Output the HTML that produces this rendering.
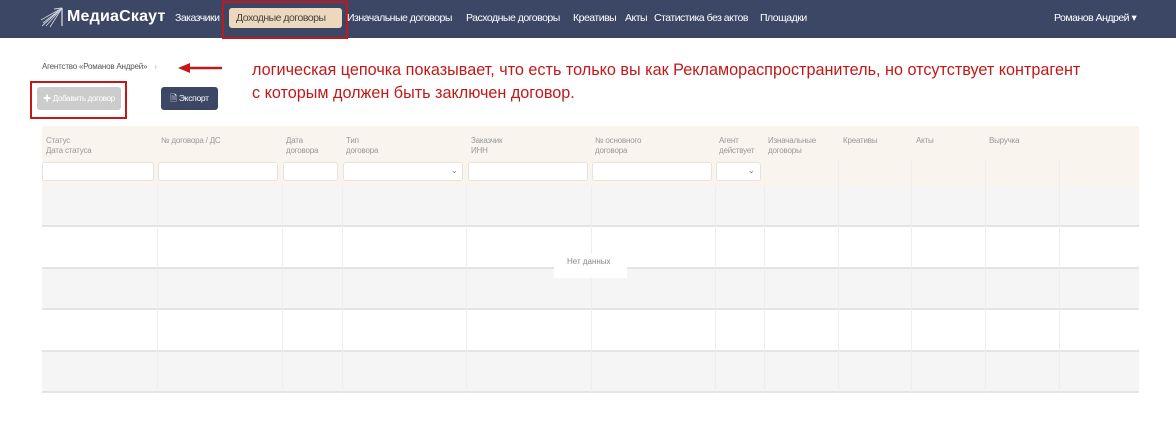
<!DOCTYPE html>
<html><head><meta charset="utf-8"><style>
*{margin:0;padding:0;box-sizing:border-box}
body{width:1176px;height:423px;background:#fff;font-family:"Liberation Sans","Noto Sans CJK SC",sans-serif;position:relative;overflow:hidden}
.a{position:absolute}
.nav{left:0;top:0;width:1176px;height:38px;background:#3b4765}
.nl{color:#fff;font-size:10.5px;top:12px;letter-spacing:-0.5px;white-space:nowrap}
.hd{font-size:8px;color:#999;line-height:10px;letter-spacing:-0.2px}
.inp{height:19px;background:#fff;border:1px solid #e6e2dd;border-radius:3px;top:162px}
.row{left:42px;width:1097px;height:41px;border-bottom:2px solid #e4e4e4}
.vl{width:1px;background:#eee}
</style></head><body>
<div class="a nav"></div>
<svg class="a" style="left:40px;top:6px" width="24" height="22" viewBox="0 0 24 22"><g stroke="#c9cfdb" stroke-width="0.9" fill="none"><path d="M2 20 L22 2"/><path d="M3 17 L22 2"/><path d="M6 20 L22 2"/><path d="M1 14 L22 2"/><path d="M10 21 L22 2"/><path d="M14 3 L22 2"/></g><path d="M22 2 V20" stroke="#fff" stroke-width="1"/></svg>
<div class="a" style="left:67px;top:8px;color:#fff;font-weight:bold;font-size:16px;letter-spacing:0.2px">МедиаСкаут</div>
<div class="a nl" style="left:175px">Заказчики</div>
<div class="a" style="left:229px;top:8px;width:113px;height:20px;background:#ecd8bd;border-radius:3px"></div>
<div class="a nl" style="left:236px;color:#444">Доходные договоры</div>
<div class="a" style="left:222px;top:1px;width:126px;height:38px;border:2px solid #c41818"></div>
<div class="a nl" style="left:347px">Изначальные договоры</div>
<div class="a nl" style="left:466px">Расходные договоры</div>
<div class="a nl" style="left:573px">Креативы</div>
<div class="a nl" style="left:625px">Акты</div>
<div class="a nl" style="left:654px">Статистика без актов</div>
<div class="a nl" style="left:760px">Площадки</div>
<div class="a nl" style="left:1054px">Романов Андрей ▾</div>

<div class="a" style="left:42px;top:62px;font-size:8px;color:#555;letter-spacing:-0.2px">Агентство «Романов Андрей» <span style="color:#aaa;margin-left:5px">›</span></div>
<svg class="a" style="left:178px;top:62px" width="44" height="12"><path d="M44 6 H10" stroke="#c41818" stroke-width="2.5"/><path d="M0 6 L12 1 L12 11 Z" fill="#c41818"/></svg>
<div class="a" style="left:252px;top:59px;font-size:16.2px;color:#c41818;line-height:23px;white-space:nowrap">логическая цепочка показывает, что есть только вы как Рекламораспространитель, но отсутствует контрагент<br>с которым должен быть заключен договор.</div>

<div class="a" style="left:37px;top:87px;width:84px;height:23px;background:#ccc;border-radius:3px;color:#fff;font-size:8px;line-height:23px;text-align:center;letter-spacing:-0.3px;white-space:nowrap">✚ Добавить договор</div>
<div class="a" style="left:30px;top:81px;width:97px;height:38px;border:2px solid #c41818"></div>
<div class="a" style="left:161px;top:87px;width:57px;height:23px;background:#3b4765;border-radius:3px;color:#fff;font-size:8.5px;line-height:23px;text-align:center;letter-spacing:-0.3px">🗎 Экспорт</div>

<div class="a" style="left:42px;top:126px;width:1097px;height:60px;background:#f9f4ee"></div>
<div class="a hd" style="left:46px;top:136px">Статус<br>Дата статуса</div>
<div class="a hd" style="left:161px;top:136px">№ договора / ДС</div>
<div class="a hd" style="left:286px;top:136px">Дата<br>договора</div>
<div class="a hd" style="left:346px;top:136px">Тип<br>договора</div>
<div class="a hd" style="left:471px;top:136px">Заказчик<br>ИНН</div>
<div class="a hd" style="left:595px;top:136px">№ основного<br>договора</div>
<div class="a hd" style="left:719px;top:136px">Агент<br>действует</div>
<div class="a hd" style="left:768px;top:136px">Изначальные<br>договоры</div>
<div class="a hd" style="left:843px;top:136px">Креативы</div>
<div class="a hd" style="left:916px;top:136px">Акты</div>
<div class="a hd" style="left:989px;top:136px">Выручка</div>
<div class="a inp" style="left:42px;width:112px"></div>
<div class="a inp" style="left:158px;width:120px"></div>
<div class="a inp" style="left:283px;width:55px"></div>
<div class="a inp" style="left:343px;width:120px"></div>
<div class="a" style="left:451px;top:166px;font-size:8px;color:#777">⌄</div>
<div class="a inp" style="left:468px;width:120px"></div>
<div class="a inp" style="left:592px;width:120px"></div>
<div class="a inp" style="left:716px;width:45px"></div>
<div class="a" style="left:748px;top:166px;font-size:8px;color:#777">⌄</div>

<div class="a row" style="top:186px;background:#f5f5f5"></div>
<div class="a row" style="top:228px;background:#fff"></div>
<div class="a row" style="top:269px;background:#f5f5f5"></div>
<div class="a row" style="top:311px;background:#fff"></div>
<div class="a row" style="top:352px;background:#f5f5f5"></div>
<div class="a vl" style="left:157px;top:186px;height:207px"></div>
<div class="a vl" style="left:282px;top:186px;height:207px"></div>
<div class="a vl" style="left:342px;top:186px;height:207px"></div>
<div class="a vl" style="left:466px;top:186px;height:207px"></div>
<div class="a vl" style="left:591px;top:186px;height:207px"></div>
<div class="a vl" style="left:715px;top:186px;height:207px"></div>
<div class="a vl" style="left:764px;top:186px;height:207px"></div>
<div class="a vl" style="left:838px;top:160px;height:233px"></div>
<div class="a vl" style="left:911px;top:160px;height:233px"></div>
<div class="a vl" style="left:985px;top:160px;height:233px"></div>
<div class="a vl" style="left:1059px;top:160px;height:233px"></div>
<div class="a" style="left:554px;top:254px;width:73px;height:24px;background:#fff"></div>
<div class="a" style="left:567px;top:257px;font-size:8px;color:#888">Нет данных</div>
</body></html>
